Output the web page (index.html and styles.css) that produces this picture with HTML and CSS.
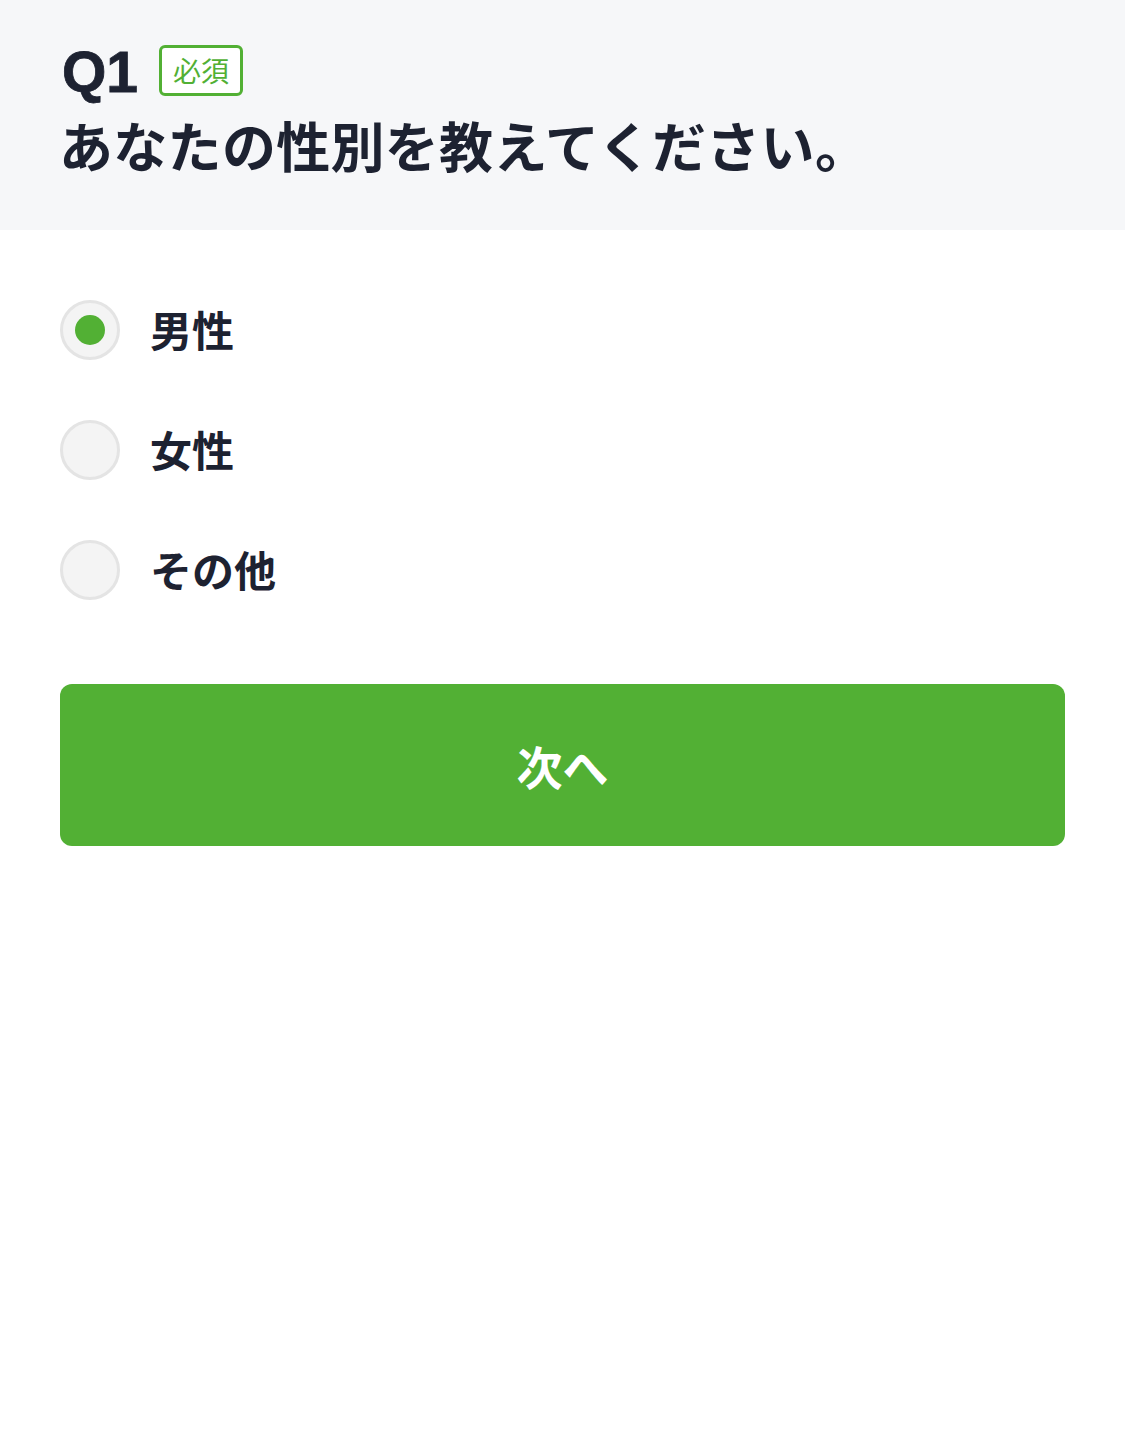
FILE: index.html
```html
<!DOCTYPE html>
<html lang="ja">
<head>
<meta charset="utf-8">
<title>Q1</title>
<link rel="stylesheet" href="styles.css">
</head>
<body>
<div class="page">
  <header class="question">
    <div class="q-head">
      <span class="q-num">Q1</span>
      <span class="badge">必須</span>
    </div>
    <h1 class="q-title">あなたの性別を教えてください。</h1>
  </header>
  <main class="answers">
    <ul class="options">
      <li class="option">
        <span class="radio checked"><span class="dot"></span></span>
        <span class="label">男性</span>
      </li>
      <li class="option">
        <span class="radio"></span>
        <span class="label">女性</span>
      </li>
      <li class="option">
        <span class="radio"></span>
        <span class="label">その他</span>
      </li>
    </ul>
    <button class="next" type="button">次へ</button>
  </main>
</div>
</body>
</html>
```
FILE: styles.css
```css
* { box-sizing: border-box; }
html, body { margin: 0; padding: 0; background: #ffffff; }
body {
  font-family: "Noto Sans CJK JP", "Noto Sans", sans-serif;
  color: #1d2231;
}
.page { width: 1125px; }

.question {
  background: #f6f7f9;
  height: 230px;
  padding: 40px 62px 0;
}
.q-head {
  display: flex;
  align-items: center;
  height: 64px;
  gap: 21px;
}
.q-num {
  font-family: "Liberation Sans", Arial, sans-serif;
  font-weight: 700;
  font-size: 57px;
  line-height: 64px;
  color: #1d2231;
  -webkit-text-stroke: 0.8px #1d2231;
}
.badge {
  display: inline-flex;
  align-items: center;
  justify-content: center;
  width: 84px;
  height: 51px;
  margin-bottom: 4px;
  border: 3px solid #52b034;
  border-radius: 6px;
  background: #ffffff;
  color: #52b034;
  font-size: 28px;
  font-weight: 400;
  line-height: 1;
}
.q-title {
  margin: 3px 0 0 -3px;
  font-size: 54px;
  font-weight: 700;
  line-height: 76px;
  letter-spacing: 0.3px;
  color: #1d2231;
}

.answers { padding: 70px 60px 0; }
.options {
  list-style: none;
  margin: 0;
  padding: 0;
  display: flex;
  flex-direction: column;
  gap: 60px;
}
.option {
  display: flex;
  align-items: center;
  gap: 30px;
  height: 60px;
}
.radio {
  width: 60px;
  height: 60px;
  flex: none;
  border-radius: 50%;
  border: 3px solid #e4e4e4;
  background: #f4f4f4;
  display: flex;
  align-items: center;
  justify-content: center;
}
.dot {
  width: 30px;
  height: 30px;
  border-radius: 50%;
  background: #52b034;
}
.label {
  font-size: 42px;
  font-weight: 700;
  line-height: 60px;
  margin-top: -3px;
  color: #1d2231;
}

.next {
  display: block;
  width: 100%;
  height: 162px;
  margin-top: 84px;
  border: none;
  border-radius: 12px;
  background: #52b034;
  color: #ffffff;
  font-family: "Noto Sans CJK JP", "Noto Sans", sans-serif;
  font-size: 46px;
  font-weight: 700;
  line-height: 1;
  padding: 0;
}
```
